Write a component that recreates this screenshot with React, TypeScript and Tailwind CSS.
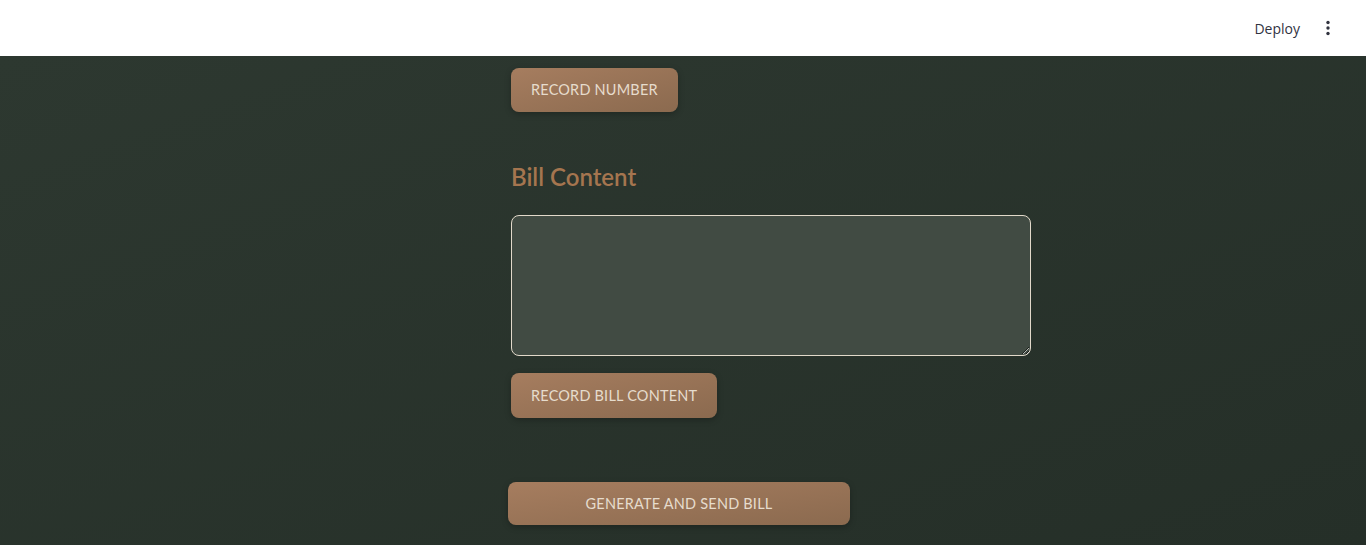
export default function App() {
  const btn =
    "rounded-lg bg-gradient-to-br from-[#a67d5f] to-[#8b6a4f] text-[14.5px] tracking-[0.2px] text-[#e6dccd] shadow-[0_2px_6px_rgba(0,0,0,0.25)]";

  return (
    <div className="flex h-[545px] flex-col overflow-hidden font-['Lato',sans-serif]">
      <header className="flex h-14 shrink-0 items-center justify-end bg-white pr-[36px]">
        <span className="mr-[26px] font-['Open_Sans',sans-serif] text-[14px] text-[#31333f]">
          Deploy
        </span>
        <svg width="4" height="16" viewBox="0 0 4 16" className="fill-[#31333f]">
          <circle cx="2" cy="2.5" r="1.7" />
          <circle cx="2" cy="8" r="1.7" />
          <circle cx="2" cy="13.5" r="1.7" />
        </svg>
      </header>

      <main className="flex flex-1 justify-center bg-gradient-to-br from-[#2d3830] to-[#252f28] pl-[176px]">
        <div className="w-[520px] pt-3">
          <button className={`${btn} h-11 px-5`}>RECORD NUMBER</button>

          <h2 className="mt-[48px] text-[24px] leading-[34px] font-semibold text-[#a5754f]">
            Bill Content
          </h2>

          <textarea className="mt-[21px] block h-[141px] w-[520px] resize-y rounded-lg border border-[#e2d9ca] bg-[#414b43] p-3 text-[#e6dccd] outline-none" />

          <button className={`${btn} mt-[17px] h-[45px] px-5`}>
            RECORD BILL CONTENT
          </button>

          <button className={`${btn} -ml-[3px] mt-16 block h-[43px] w-[342px]`}>
            GENERATE AND SEND BILL
          </button>
        </div>
      </main>
    </div>
  );
}
